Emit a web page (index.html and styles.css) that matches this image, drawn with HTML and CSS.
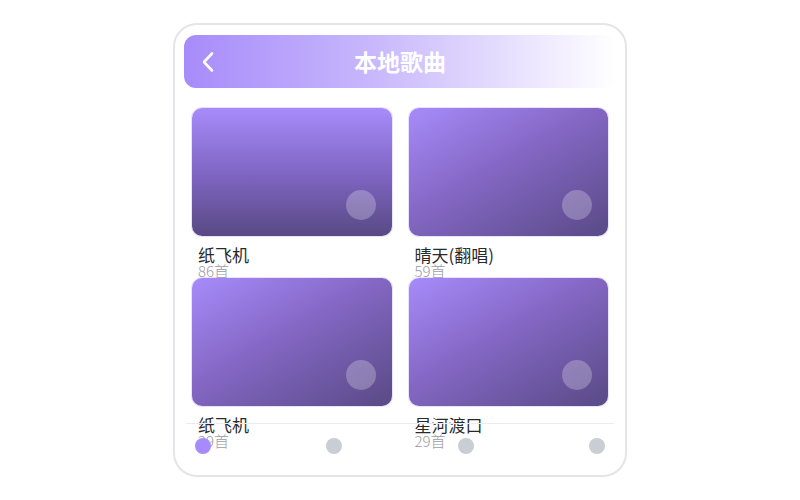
FILE: index.html
```html
<!DOCTYPE html>
<html>
<head>
  <title>本地歌曲</title>
  <link rel="stylesheet" href="styles.css">
</head>
<body>
  <div class="phone">
    <div class="header">
      <span class="back">
        <svg width="14" height="22" viewBox="0 0 14 22"><path d="M11 2.5 L3 11 L11 19.5" fill="none" stroke="#fff" stroke-width="2.6" stroke-linecap="round" stroke-linejoin="round"/></svg>
      </span>
      <h1 class="title">本地歌曲</h1>
    </div>

    <div class="list">
      <div class="item">
        <div class="cover cover-down"><span class="play"></span></div>
        <div class="name">纸飞机</div>
        <div class="count">86首</div>
      </div>
      <div class="item">
        <div class="cover"><span class="play"></span></div>
        <div class="name">晴天(翻唱)</div>
        <div class="count">59首</div>
      </div>
      <div class="item">
        <div class="cover"><span class="play"></span></div>
        <div class="name">纸飞机</div>
        <div class="count">29首</div>
      </div>
      <div class="item">
        <div class="cover"><span class="play"></span></div>
        <div class="name">星河渡口</div>
        <div class="count">29首</div>
      </div>
    </div>

    <div class="nav">
      <span class="dot active"></span>
      <span class="dot"></span>
      <span class="dot"></span>
      <span class="dot"></span>
    </div>
  </div>
</body>
</html>
```

FILE: styles.css
```css
* { box-sizing: border-box; }
body {
  margin: 0;
  padding-top: 23px;
  background: #fff;
  font-family: "Noto Sans CJK SC", "Noto Sans", sans-serif;
  display: flex;
  justify-content: center;
}
.phone {
  position: relative;
  width: 454px;
  height: 454px;
  border: 2px solid #e4e4e9;
  border-radius: 24px;
  padding: 10px 9px 0;
  overflow: hidden;
  background: #fff;
}
.header {
  position: relative;
  height: 53px;
  border-radius: 12px;
  background: linear-gradient(90deg, #a78bfa 0%, #c9b9fc 45%, #ffffff 100%);
  display: flex;
  align-items: center;
  justify-content: center;
}
.back {
  position: absolute;
  left: 17px;
  top: 16px;
  display: flex;
}
.title {
  margin: 0;
  color: #fff;
  font-size: 23px;
  font-weight: 700;
  line-height: 1;
}
.list {
  margin-top: 20px;
  padding: 0 8px;
  display: grid;
  grid-template-columns: 1fr 1fr;
  column-gap: 17px;
}
.item { height: 170px; }
.cover {
  position: relative;
  height: 128px;
  border-radius: 10px;
  background: linear-gradient(150deg, #a78bfa 0%, #8467c4 45%, #594a86 100%);
  box-shadow: 0 0 0 1px rgba(167, 139, 250, 0.25);
}
.cover-down {
  background: linear-gradient(180deg, #a78bfa 0%, #7d63bf 55%, #584a84 100%);
}
.play {
  position: absolute;
  right: 16px;
  bottom: 16px;
  width: 30px;
  height: 30px;
  border-radius: 50%;
  background: rgba(255, 255, 255, 0.25);
}
.name {
  margin-top: 9px;
  padding-left: 6px;
  font-size: 17px;
  line-height: 20px;
  color: #2a2a2a;
}
.count {
  padding-left: 6px;
  font-size: 15px;
  font-weight: 300;
  line-height: 12px;
  color: #9b9ba5;
}
.nav {
  position: absolute;
  left: 11px;
  right: 11px;
  bottom: 0;
  height: 52px;
  border-top: 1px solid #ececf0;
  padding: 14px 9px 0;
  display: flex;
  justify-content: space-between;
  align-items: flex-start;
}
.dot {
  width: 16px;
  height: 16px;
  border-radius: 50%;
  background: #c9cdd4;
}
.dot.active { background: #a78bfa; }
```
